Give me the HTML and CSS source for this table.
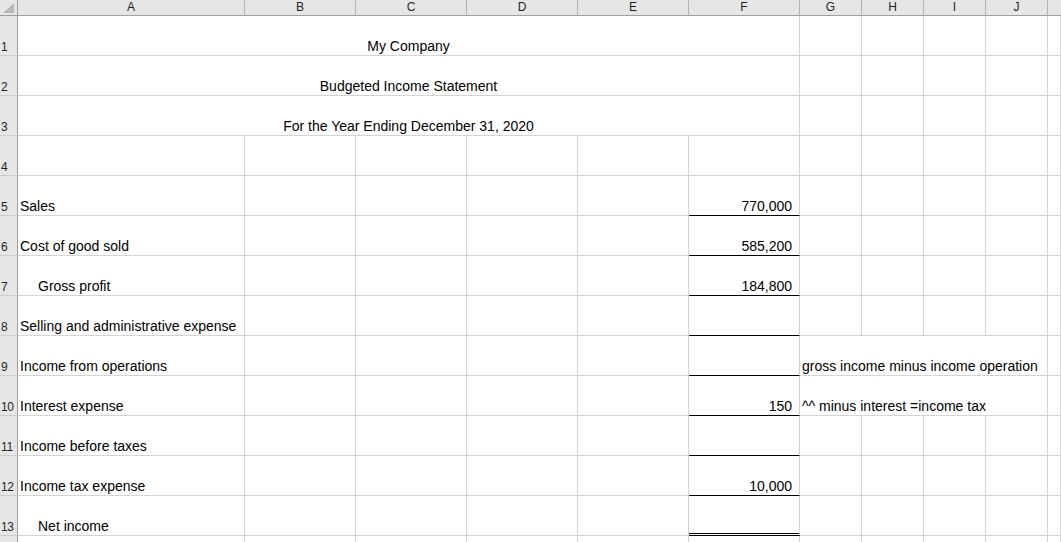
FILE: index.html
```html
<!DOCTYPE html>
<html lang="en">
<head>
<meta charset="utf-8">
<title>Budgeted Income Statement</title>
<link rel="stylesheet" href="styles.css">
</head>
<body>
<div class="sheet">
  <div class="corner"><svg width="18" height="16" viewBox="0 0 18 16"><polygon points="14,3 14,13 3,13" fill="#b9b9b9"/></svg></div>
  <div class="colhdr">A</div>
  <div class="colhdr">B</div>
  <div class="colhdr">C</div>
  <div class="colhdr">D</div>
  <div class="colhdr">E</div>
  <div class="colhdr">F</div>
  <div class="colhdr">G</div>
  <div class="colhdr">H</div>
  <div class="colhdr">I</div>
  <div class="colhdr">J</div>
  <div class="colhdr last"></div>

  <div class="rowhdr">1</div>
  <div class="cell title">My Company</div>
  <div class="cell"></div><div class="cell"></div><div class="cell"></div><div class="cell"></div><div class="cell"></div>

  <div class="rowhdr">2</div>
  <div class="cell title">Budgeted Income Statement</div>
  <div class="cell"></div><div class="cell"></div><div class="cell"></div><div class="cell"></div><div class="cell"></div>

  <div class="rowhdr">3</div>
  <div class="cell title">For the Year Ending December 31, 2020</div>
  <div class="cell"></div><div class="cell"></div><div class="cell"></div><div class="cell"></div><div class="cell"></div>

  <div class="rowhdr">4</div>
  <div class="cell"></div><div class="cell"></div><div class="cell"></div><div class="cell"></div><div class="cell"></div><div class="cell"></div>
  <div class="cell"></div><div class="cell"></div><div class="cell"></div><div class="cell"></div><div class="cell"></div>

  <div class="rowhdr">5</div>
  <div class="cell">Sales</div>
  <div class="cell"></div><div class="cell"></div><div class="cell"></div><div class="cell"></div>
  <div class="cell num total">770,000</div>
  <div class="cell"></div><div class="cell"></div><div class="cell"></div><div class="cell"></div><div class="cell"></div>

  <div class="rowhdr">6</div>
  <div class="cell">Cost of good sold</div>
  <div class="cell"></div><div class="cell"></div><div class="cell"></div><div class="cell"></div>
  <div class="cell num total">585,200</div>
  <div class="cell"></div><div class="cell"></div><div class="cell"></div><div class="cell"></div><div class="cell"></div>

  <div class="rowhdr">7</div>
  <div class="cell indent">Gross profit</div>
  <div class="cell"></div><div class="cell"></div><div class="cell"></div><div class="cell"></div>
  <div class="cell num total">184,800</div>
  <div class="cell"></div><div class="cell"></div><div class="cell"></div><div class="cell"></div><div class="cell"></div>

  <div class="rowhdr">8</div>
  <div class="cell">Selling and administrative expense</div>
  <div class="cell"></div><div class="cell"></div><div class="cell"></div><div class="cell"></div>
  <div class="cell num total"></div>
  <div class="cell"></div><div class="cell"></div><div class="cell"></div><div class="cell"></div><div class="cell"></div>

  <div class="rowhdr">9</div>
  <div class="cell">Income from operations</div>
  <div class="cell"></div><div class="cell"></div><div class="cell"></div><div class="cell"></div>
  <div class="cell num total"></div>
  <div class="cell note">gross income minus income operation</div>
  <div class="cell"></div>

  <div class="rowhdr">10</div>
  <div class="cell">Interest expense</div>
  <div class="cell"></div><div class="cell"></div><div class="cell"></div><div class="cell"></div>
  <div class="cell num total">150</div>
  <div class="cell note">^^ minus interest =income tax</div>
  <div class="cell"></div>

  <div class="rowhdr">11</div>
  <div class="cell">Income before taxes</div>
  <div class="cell"></div><div class="cell"></div><div class="cell"></div><div class="cell"></div>
  <div class="cell num total"></div>
  <div class="cell"></div><div class="cell"></div><div class="cell"></div><div class="cell"></div><div class="cell"></div>

  <div class="rowhdr">12</div>
  <div class="cell">Income tax expense</div>
  <div class="cell"></div><div class="cell"></div><div class="cell"></div><div class="cell"></div>
  <div class="cell num total">10,000</div>
  <div class="cell"></div><div class="cell"></div><div class="cell"></div><div class="cell"></div><div class="cell"></div>

  <div class="rowhdr">13</div>
  <div class="cell indent">Net income</div>
  <div class="cell"></div><div class="cell"></div><div class="cell"></div><div class="cell"></div>
  <div class="cell num grand"></div>
  <div class="cell"></div><div class="cell"></div><div class="cell"></div><div class="cell"></div><div class="cell"></div>

  <div class="rowhdr"></div>
  <div class="cell"></div><div class="cell"></div><div class="cell"></div><div class="cell"></div><div class="cell"></div><div class="cell"></div>
  <div class="cell"></div><div class="cell"></div><div class="cell"></div><div class="cell"></div><div class="cell"></div>
</div>
</body>
</html>
```

FILE: styles.css
```css
html, body {
  margin: 0;
  padding: 0;
  background: #ffffff;
  overflow: hidden;
  height: 542px;
}

.sheet {
  display: grid;
  grid-template-columns: 18px 227px 111px 111px 111px 111px 111px 62px 62px 62px 62px 1fr;
  grid-template-rows: 16px;
  grid-auto-rows: 40px;
  width: 1061px;
  font-family: "Liberation Sans", Arial, sans-serif;
  font-size: 14px;
  color: #000;
}

.corner {
  background: #e6e6e6;
  border-right: 1px solid #9f9f9f;
  border-bottom: 1px solid #9f9f9f;
  box-sizing: border-box;
  overflow: hidden;
}
.corner svg { display: block; }

.colhdr {
  background: #e6e6e6;
  border-right: 1px solid #b4b4b4;
  border-bottom: 1px solid #9f9f9f;
  box-sizing: border-box;
  font-size: 12px;
  line-height: 14px;
  text-align: center;
  color: #1f1f1f;
}
.colhdr.last { border-right: none; }

.rowhdr {
  background: #e6e6e6;
  border-right: 1px solid #9f9f9f;
  border-bottom: 1px solid #cdcdcd;
  box-sizing: border-box;
  font-size: 12px;
  line-height: 13px;
  color: #1f1f1f;
  display: flex;
  align-items: flex-end;
  padding: 0 0 1px 1px;
  white-space: nowrap;
  letter-spacing: -0.3px;
}

.cell {
  border-right: 1px solid #d4d4d4;
  border-bottom: 1px solid #d4d4d4;
  box-sizing: border-box;
  display: flex;
  align-items: flex-end;
  padding: 0 2px 1px 2px;
  line-height: 16px;
  white-space: nowrap;
  min-width: 0;
}

.title {
  grid-column: span 6;
  justify-content: center;
}

.indent { padding-left: 20px; }

.num {
  justify-content: flex-end;
  padding-right: 7px;
}

.total { border-bottom: 1px solid #000; }
.grand { border-bottom: 3px double #000; }

.note {
  grid-column: span 4;
}
```
